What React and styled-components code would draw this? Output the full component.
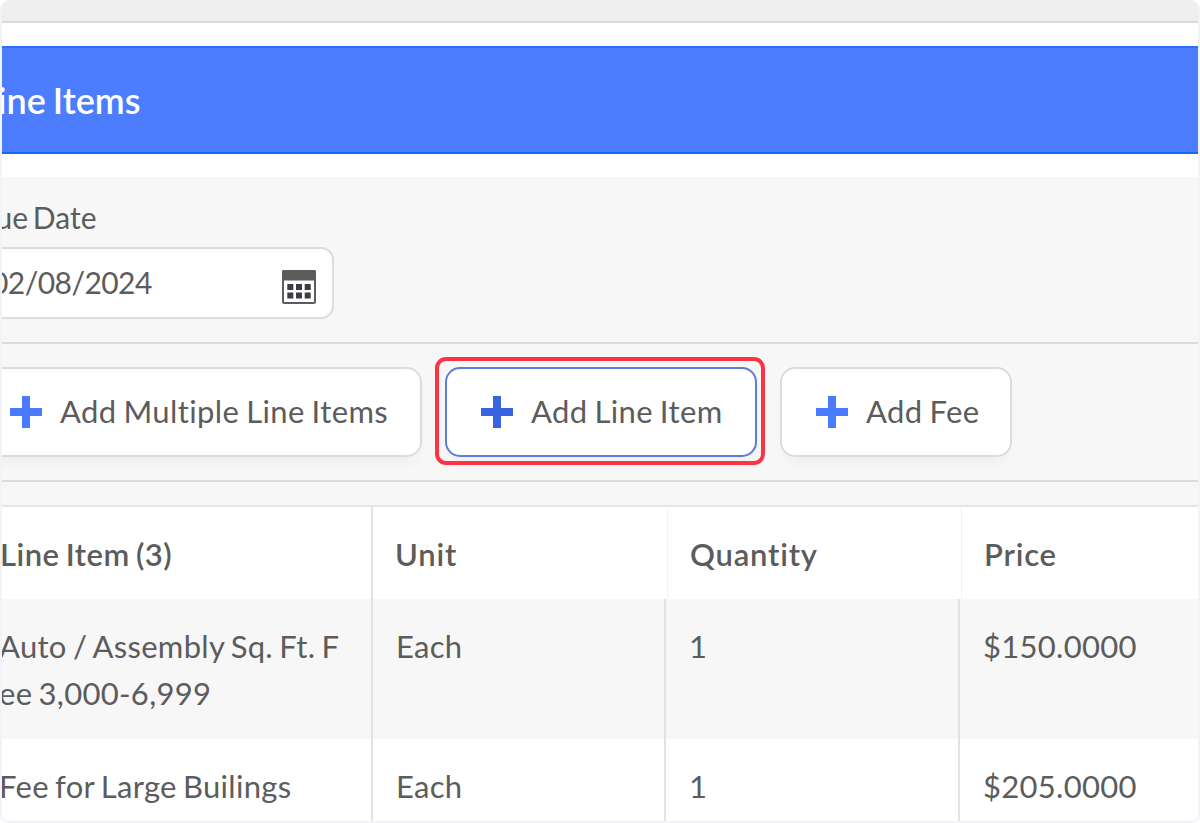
import React from "react";
import styled, { createGlobalStyle } from "styled-components";

const GlobalStyle = createGlobalStyle`
  *,
  *::after {
    box-sizing: border-box;
  }
  body {
    margin: 0;
    background: #ffffff;
    overflow: hidden;
  }
`;

const Frame = styled.div`
  width: 1200px;
  height: 823px;
  border: 2px solid #f2f2f9;
  border-top-width: 0;
  border-radius: 9px;
  background: #ffffff;
  overflow: hidden;
  display: flex;
  flex-direction: column;
  font-family: Lato, "Liberation Sans", sans-serif;
  font-size: 31px;
  color: #5c5c5c;
  white-space: nowrap;
`;

const TopBar = styled.div`
  flex: none;
  height: 23px;
  background: #efefef;
  border-bottom: 2px solid #dadada;
`;

const TitleBar = styled.header`
  flex: none;
  display: flex;
  align-items: center;
  height: 108px;
  margin: 23px 0;
  background: #4d7dff;
  border-top: 2px solid #2f6dff;
  border-bottom: 2px solid #1468ff;
`;

const Title = styled.h1`
  margin: 0 0 0 -23px;
  font-size: 36px;
  line-height: 40px;
  font-weight: 600;
  word-spacing: -2px;
  color: #ffffff;
`;

const Panel = styled.section`
  flex: none;
  height: 328px;
  background: #f7f7f7;
`;

const DateField = styled.div`
  display: flex;
  flex-direction: column;
  height: 167px;
  border-bottom: 2px solid #dcdcdc;
`;

const Label = styled.label`
  height: 70px;
  padding-top: 22px;
  margin-left: -29px;
  line-height: 36px;
  font-size: 30px;
  word-spacing: -3px;
`;

const DateInput = styled.div`
  display: flex;
  align-items: center;
  justify-content: space-between;
  width: 354px;
  height: 72px;
  margin-left: -22px;
  padding: 0 16px 2px 9px;
  border: 2px solid #dcdcdc;
  border-radius: 13px;
  background: #ffffff;
  font-size: 30px;
  letter-spacing: -0.55px;

  svg {
    margin-top: 9px;
  }
`;

const Actions = styled.div`
  display: flex;
  height: 138px;
  padding-top: 23px;
  margin-left: -28px;
  border-bottom: 2px solid #dcdcdc;
`;

const ActionButton = styled.button`
  display: flex;
  align-items: center;
  width: ${(p) => p.$width}px;
  height: 90px;
  margin: 0 23px 0 0;
  padding: 0 0 2px 34px;
  gap: 18px;
  border: 2px solid ${(p) => (p.$active ? "#5b7be0" : "#dcdcdc")};
  border-radius: 15px;
  background: #ffffff;
  box-shadow: 0 12px 16px -6px rgba(0, 0, 0, 0.04);
  font: inherit;
  letter-spacing: 0.4px;
  word-spacing: -1.5px;
  color: #5c5c5c;

  svg {
    flex: none;
    margin-top: 2px;
    color: ${(p) => (p.$active ? "#3864e2" : "#4a7aff")};
  }
`;

const Highlight = styled.div`
  position: relative;

  &::after {
    content: "";
    position: absolute;
    top: -10px;
    left: -10px;
    width: 330px;
    height: 108px;
    border: 4px solid #fb3345;
    border-radius: 11px;
    pointer-events: none;
  }
`;

const Grid = styled.div`
  flex: none;
  border-top: 2px solid #e6e6e6;
`;

const GridRow = styled.div`
  display: grid;
  grid-template-columns: ${(p) => (p.$head ? "371px 295px 294px 1fr" : "371px 293px 294px 1fr")};
  height: ${(p) => p.$height}px;
  background: ${(p) => (p.$shaded ? "#f7f7f7" : "#ffffff")};
`;

const HeadCell = styled.div`
  padding: 24px 0 0 22px;
  border-right: 1px solid #f3f3f3;
  font-weight: 600;
  line-height: 46px;
  letter-spacing: 0.8px;

  &:last-child {
    border-right: 0;
  }
`;

const NameHeadCell = styled(HeadCell)`
  padding-left: 0;
  border-right: 2px solid #e3e3e3;
  letter-spacing: 0.5px;
  word-spacing: -2px;
  text-indent: -2px;
`;

const Cell = styled.div`
  padding: 24px 0 0 23px;
  border-right: 2px solid #e3e3e3;
  line-height: 47px;
  letter-spacing: 0.3px;

  &:last-child {
    border-right: 0;
  }
`;

const NameCell = styled(Cell)`
  padding-left: 0;
  word-spacing: -2px;
`;

const NameLine = styled.div`
  margin-left: -3px;
`;

function PlusIcon() {
  return (
    <svg width="32" height="32" viewBox="0 0 32 32">
      <path d="M12 0h8v12h12v8H20v12h-8V20H0v-8h12z" fill="currentColor" />
    </svg>
  );
}

function CalendarIcon() {
  return (
    <svg width="34" height="34" viewBox="0 0 34 34">
      <rect x="1" y="1" width="32" height="32" rx="1.5" fill="#ffffff" stroke="#5c5c5c" strokeWidth="2" />
      <rect x="0" y="0" width="34" height="10.5" rx="1.5" fill="#5c5c5c" />
      {[5.3, 14, 22.7].map((x) => (
        <g key={x} fill="#3c3c44">
          <rect x={x} y="14" width="6" height="6" />
          <rect x={x} y="22.5" width="6" height="6" />
        </g>
      ))}
    </svg>
  );
}

const rows = [
  { name: ["Auto / Assembly Sq. Ft. F", "ee 3,000-6,999"], unit: "Each", qty: "1", price: "$150.0000" },
  { name: ["Fee for Large Builings"], unit: "Each", qty: "1", price: "$205.0000" },
];

function App() {
  return (
    <>
      <GlobalStyle />
      <Frame>
        <TopBar />
        <TitleBar>
          <Title>Line Items</Title>
        </TitleBar>
        <Panel>
          <DateField>
            <Label>Due Date</Label>
            <DateInput>
              <span>02/08/2024</span>
              <CalendarIcon />
            </DateInput>
          </DateField>
          <Actions>
            <ActionButton $width={448}>
              <PlusIcon />
              Add Multiple Line Items
            </ActionButton>
            <Highlight>
              <ActionButton $width={312} $active>
                <PlusIcon />
                Add Line Item
              </ActionButton>
            </Highlight>
            <ActionButton $width={232}>
              <PlusIcon />
              Add Fee
            </ActionButton>
          </Actions>
        </Panel>
        <Grid>
          <GridRow $head $height={92}>
            <NameHeadCell>Line Item (3)</NameHeadCell>
            <HeadCell>Unit</HeadCell>
            <HeadCell>Quantity</HeadCell>
            <HeadCell>Price</HeadCell>
          </GridRow>
          {rows.map((row, i) => (
            <GridRow key={row.price} $shaded={i % 2 === 0} $height={140}>
              <NameCell>
                {row.name.map((line) => (
                  <NameLine key={line}>{line}</NameLine>
                ))}
              </NameCell>
              <Cell>{row.unit}</Cell>
              <Cell>{row.qty}</Cell>
              <Cell>{row.price}</Cell>
            </GridRow>
          ))}
        </Grid>
      </Frame>
    </>
  );
}

export default App;
